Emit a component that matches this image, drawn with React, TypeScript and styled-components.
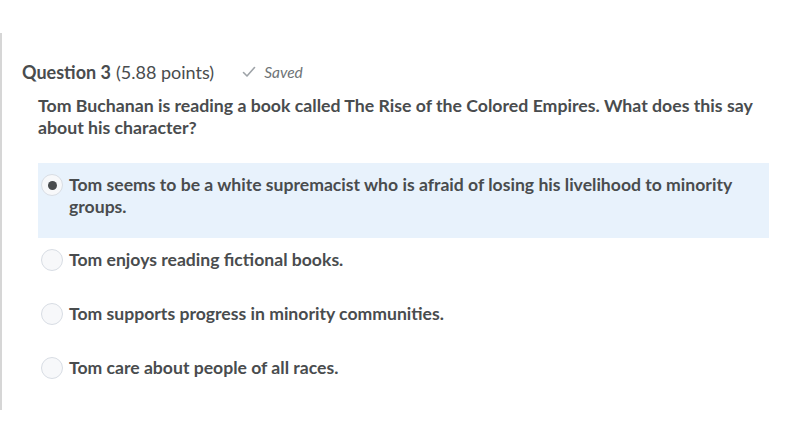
import React from "react";
import styled, { createGlobalStyle } from "styled-components";

const Global = createGlobalStyle`
  html, body { margin: 0; padding: 0; background: #ffffff; }
  body { font-family: Lato, "Noto Sans", sans-serif; color: #494c4e; }
`;

const Page = styled.div`
  width: 800px;
  height: 431px;
  padding-top: 33px;
  box-sizing: border-box;
`;

const Panel = styled.div`
  height: 377px;
  border-left: 2px solid #d6d6d6;
  box-sizing: border-box;
  padding: 26px 31px 0 20px;
`;

const Header = styled.div`
  display: flex;
  align-items: center;
  height: 26px;
  font-size: 18px;
`;

const Title = styled.span`
  font-weight: 700;
`;

const Points = styled.span`
  font-weight: 400;
  margin-left: 5px;
`;

const Status = styled.span`
  display: inline-flex;
  align-items: center;
  gap: 8px;
  margin-left: 28px;
  font-style: italic;
  font-size: 15.5px;
  color: #6e7376;
`;

const Prompt = styled.p`
  margin: 10px 0 0 16px;
  font-size: 17.7px;
  font-weight: 700;
  line-height: 22px;
  max-width: 730px;
`;

const Options = styled.div`
  margin: 24px 0 0 16px;
  display: flex;
  flex-direction: column;
`;

const Option = styled.label<{ $selected?: boolean }>`
  display: flex;
  align-items: flex-start;
  gap: 6px;
  padding: 11px 8px 21px 3px;
  background: ${(p) => (p.$selected ? "#e8f2fc" : "transparent")};
  font-size: 17.6px;
  font-weight: 700;
  line-height: 21.5px;
`;

const Radio = styled.span<{ $checked?: boolean }>`
  flex: none;
  width: 22px;
  height: 22px;
  box-sizing: border-box;
  border-radius: 50%;
  border: 1.5px solid #d8dde4;
  background: #f7f8fa;
  display: flex;
  align-items: center;
  justify-content: center;
  &::after {
    content: "";
    width: 9px;
    height: 9px;
    border-radius: 50%;
    background: #494c4e;
    display: ${(p) => (p.$checked ? "block" : "none")};
  }
`;

const OptionText = styled.span`
  flex: 1;
`;

const options = [
  "Tom seems to be a white supremacist who is afraid of losing his livelihood to minority groups.",
  "Tom enjoys reading fictional books.",
  "Tom supports progress in minority communities.",
  "Tom care about people of all races.",
];

export default function App() {
  return (
    <>
      <Global />
      <Page>
        <Panel>
          <Header>
            <Title>Question 3</Title>
            <Points>(5.88 points)</Points>
            <Status>
              <svg width="14" height="12" viewBox="0 0 14 12" fill="none">
                <path d="M1.5 6.5 L5 10 L12.5 1.5" stroke="#9ea3a8" strokeWidth="1.6" strokeLinecap="round" strokeLinejoin="round" />
              </svg>
              Saved
            </Status>
          </Header>
          <Prompt>
            Tom Buchanan is reading a book called The Rise of the Colored Empires. What does this say about his character?
          </Prompt>
          <Options>
            {options.map((o, i) => (
              <Option key={i} $selected={i === 0}>
                <Radio $checked={i === 0} />
                <OptionText>{o}</OptionText>
              </Option>
            ))}
          </Options>
        </Panel>
      </Page>
    </>
  );
}
